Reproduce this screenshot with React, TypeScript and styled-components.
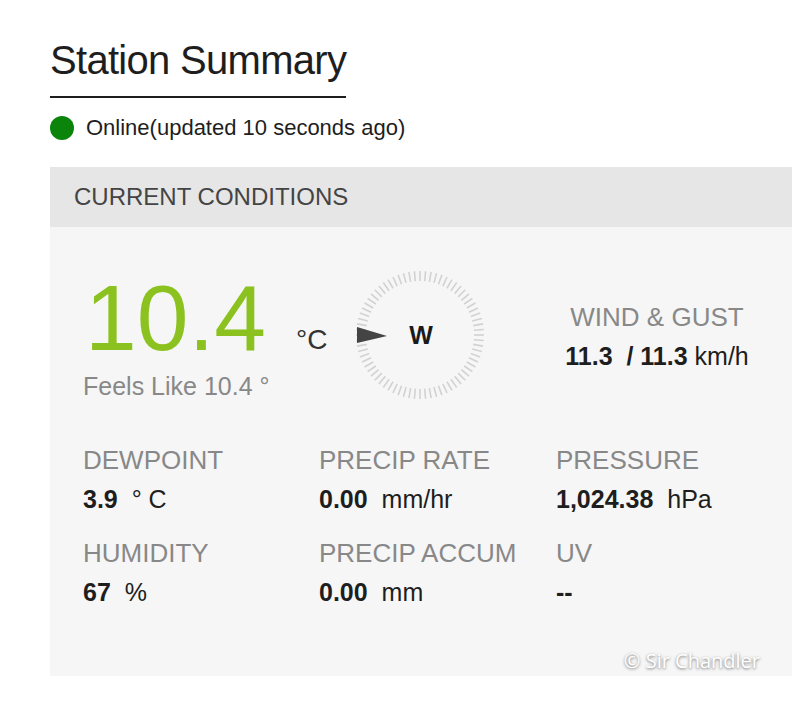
import React from "react";
import styled, { createGlobalStyle } from "styled-components";

const Global = createGlobalStyle`
  html, body { margin: 0; padding: 0; background: #ffffff; }
  body { font-family: "Liberation Sans", Arial, Helvetica, sans-serif; color: #222; }
`;

const Page = styled.div`
  width: 800px;
  height: 702px;
  box-sizing: border-box;
  padding: 0 8px 0 50px;
`;

const Title = styled.h1`
  display: inline-block;
  margin: 0;
  padding: 38px 0 14px 0;
  font-size: 40px;
  font-weight: 400;
  line-height: 44px;
  letter-spacing: -0.7px;
  color: #1e1e1e;
  border-bottom: 2px solid #1e1e1e;
`;

const StatusRow = styled.div`
  display: flex;
  align-items: center;
  gap: 12px;
  margin-top: 16px;
  height: 28px;
  font-size: 22px;
  color: #1e1e1e;
`;

const Dot = styled.span`
  width: 24px;
  height: 24px;
  border-radius: 50%;
  background: #0a840a;
  flex: none;
`;

const Panel = styled.section`
  margin-top: 25px;
  width: 742px;
  height: 509px;
  background: #f6f6f6;
  position: relative;
`;

const PanelHeader = styled.div`
  height: 60px;
  background: #e6e6e6;
  display: flex;
  align-items: center;
  padding-left: 24px;
  font-size: 24px;
  color: #444;
`;

const Body = styled.div`
  padding: 45px 0 0 33px;
`;

const TopRow = styled.div`
  display: flex;
  align-items: flex-start;
`;

const TempBlock = styled.div`
  display: flex;
  flex-direction: column;
  width: 267px;
`;

const TempLine = styled.div`
  display: flex;
  align-items: baseline;
`;

const TempValue = styled.span`
  font-size: 93px;
  line-height: 93px;
  color: #8cc21f;
  margin-left: 2px;
`;

const TempUnit = styled.span`
  font-size: 28px;
  color: #333;
  margin-left: 30px;
  position: relative;
  top: -1px;
`;

const Feels = styled.div`
  margin-top: 7px;
  font-size: 25px;
  color: #888;
`;

const Compass = styled.div`
  width: 140px;
  height: 140px;
  margin-top: -7px;
  flex: none;
`;

const Wind = styled.div`
  width: 220px;
  margin-left: 57px;
  margin-top: 30px;
  text-align: center;
`;

const Label = styled.div`
  font-size: 26px;
  line-height: 30px;
  color: #888;
  white-space: nowrap;
`;

const Value = styled.div`
  margin-top: 9px;
  font-size: 25px;
  line-height: 30px;
  color: #1e1e1e;
  white-space: nowrap;
`;

const Num = styled.b`
  font-weight: 700;
`;

const Grid = styled.div`
  display: grid;
  grid-template-columns: 236px 237px 200px;
  row-gap: 24px;
  margin-top: 40px;
`;

const Stat = styled.div``;

const Watermark = styled.div`
  position: absolute;
  right: 32px;
  bottom: 2px;
  font-family: "Open Sans", "DejaVu Sans", sans-serif;
  font-size: 20px;
  color: #ffffff;
  text-shadow: 0 1px 3px rgba(0, 0, 0, 0.55);
`;

const ticks = Array.from({ length: 72 }, (_, i) => i * 5);

function CompassRose() {
  const c = 70;
  return (
    <svg width="140" height="140" viewBox="0 0 140 140">
      {ticks.map((a) => {
        const r = (a * Math.PI) / 180;
        const r1 = 54;
        const r2 = 64;
        return (
          <line
            key={a}
            x1={c + r1 * Math.cos(r)}
            y1={c + r1 * Math.sin(r)}
            x2={c + r2 * Math.cos(r)}
            y2={c + r2 * Math.sin(r)}
            stroke="#d2d2d2"
            strokeWidth="1.6"
          />
        );
      })}
      <polygon points="7,62 7,78 37,71" fill="#444" />
      <text
        x="71"
        y="79"
        textAnchor="middle"
        fontFamily="Liberation Sans, Arial, sans-serif"
        fontWeight="700"
        fontSize="25"
        fill="#1a1a1a"
      >
        W
      </text>
    </svg>
  );
}

const stats = [
  { label: "DEWPOINT", num: "3.9", unit: "° C" },
  { label: "PRECIP RATE", num: "0.00", unit: "mm/hr" },
  { label: "PRESSURE", num: "1,024.38", unit: "hPa" },
  { label: "HUMIDITY", num: "67", unit: "%" },
  { label: "PRECIP ACCUM", num: "0.00", unit: "mm" },
  { label: "UV", num: "--", unit: "" },
];

export default function App() {
  return (
    <Page>
      <Global />
      <Title>Station Summary</Title>
      <StatusRow>
        <Dot />
        <span>Online(updated 10 seconds ago)</span>
      </StatusRow>
      <Panel>
        <PanelHeader>CURRENT CONDITIONS</PanelHeader>
        <Body>
          <TopRow>
            <TempBlock>
              <TempLine>
                <TempValue>10.4</TempValue>
                <TempUnit>°C</TempUnit>
              </TempLine>
              <Feels>Feels Like 10.4 °</Feels>
            </TempBlock>
            <Compass>
              <CompassRose />
            </Compass>
            <Wind>
              <Label>WIND &amp; GUST</Label>
              <Value>
                <Num>11.3&nbsp; / 11.3</Num> km/h
              </Value>
            </Wind>
          </TopRow>
          <Grid>
            {stats.map((s) => (
              <Stat key={s.label}>
                <Label>{s.label}</Label>
                <Value>
                  <Num>{s.num}</Num>
                  {s.unit ? <>&nbsp; {s.unit}</> : null}
                </Value>
              </Stat>
            ))}
          </Grid>
        </Body>
        <Watermark>© Sir Chandler</Watermark>
      </Panel>
    </Page>
  );
}
